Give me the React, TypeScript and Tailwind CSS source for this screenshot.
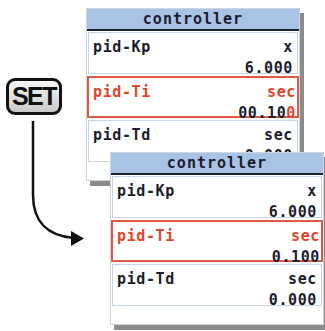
import React from "react";

type RowProps = {
  label: string;
  unit: string;
  value: React.ReactNode;
  selected?: boolean;
  mt?: string;
};

function Row({ label, unit, value, selected, mt }: RowProps) {
  return (
    <div
      className={
        "h-[42px] px-[4px] pt-[6px] " +
        (mt ?? "") +
        (selected
          ? " border-2 border-[#df5a45] text-[#e2452c] pl-[4px] pr-[1px] pt-[5px]"
          : " border border-[#c6d3e8] mx-[1px] text-[#1b1d2e]")
      }
    >
      <div className="flex justify-between leading-[16px]">
        <span>{label}</span>
        <span>{unit}</span>
      </div>
      <div className="flex justify-end leading-[16px] mt-[5px]">{value}</div>
    </div>
  );
}

function Panel({ pos, ti }: { pos: string; ti: React.ReactNode }) {
  return (
    <div
      className={
        "absolute w-[214px] h-[173px] bg-white border border-[#cfd5de] shadow-[4px_5px_0_#8b8b8b] flex flex-col " +
        pos
      }
      style={{ fontFamily: '"DejaVu Sans Mono", "Liberation Mono", monospace' }}
    >
      <div className="h-[22px] shrink-0 bg-[#a9c3e6] border-b-2 border-[#1d2538] flex items-center justify-center text-[15px] font-bold tracking-[1px] text-[#1b1d2e]">
        controller
      </div>
      <div className="flex flex-col text-[15px] font-bold tracking-[0.6px] pt-[1px]">
        <Row label="pid-Kp" unit="x" value={<span className="text-[#1b1d2e]">6.000</span>} />
        <Row label="pid-Ti" unit="sec" value={ti} selected mt="mt-[2px]" />
        <Row label="pid-Td" unit="sec" value={<span className="text-[#1b1d2e]">0.000</span>} mt="mt-[2px]" />
      </div>
    </div>
  );
}

export default function App() {
  return (
    <div className="relative w-[325px] h-[331px] bg-white overflow-hidden">
      <div
        className="absolute left-[6px] top-[78px] w-[56px] h-[37px] rounded-[9px] border-[3px] border-[#111] bg-gradient-to-b from-[#f7f7f7] to-[#c9c9c9] flex items-center justify-center text-[25px] font-bold tracking-[-1.5px] text-[#111]"
        style={{ fontFamily: '"Liberation Sans", Arial, sans-serif' }}
      >
        SET
      </div>
      <svg className="absolute left-0 top-0" width="110" height="260" viewBox="0 0 110 260">
        <path
          d="M33 121 L33 195 C33 222 48 236 74 238"
          fill="none"
          stroke="#111"
          strokeWidth="2.5"
        />
        <polygon points="71,231 84,238.5 71,246" fill="#111" />
      </svg>
      <Panel
        pos="left-[86px] top-[8px]"
        ti={
          <span>
            <span className="text-[#1b1d2e]">00.10</span>
            <span className="text-[#e2452c]">0</span>
          </span>
        }
      />
      <Panel pos="left-[110px] top-[152px]" ti={<span className="text-[#1b1d2e]">0.100</span>} />
    </div>
  );
}
